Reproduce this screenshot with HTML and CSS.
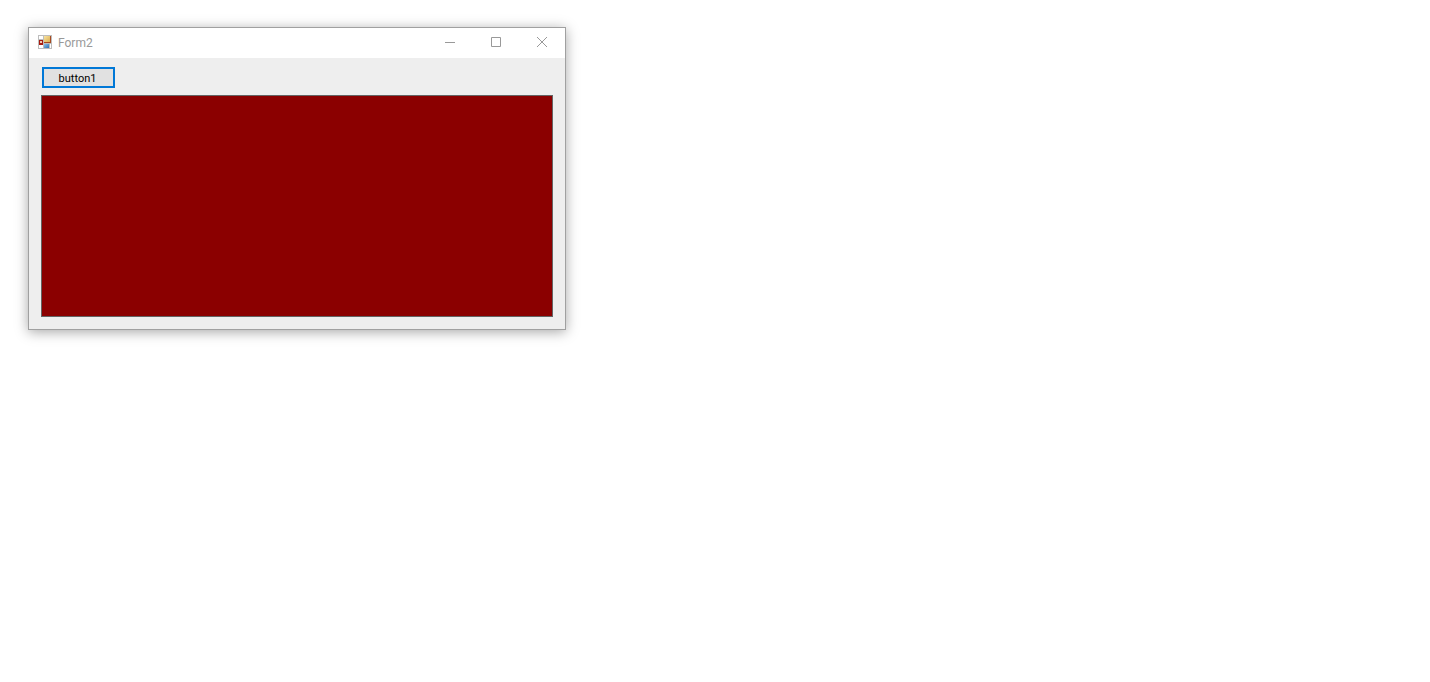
FILE: index.html
```html
<!DOCTYPE html>
<html lang="en">
<head>
    <meta charset="UTF-8">
    <meta name="viewport" content="width=device-width, initial-scale=1.0">
    <title>Form2</title>
    <link rel="stylesheet" href="styles.css">
</head>
<body>
    <main class="window">
        <header class="title-bar">
            <svg class="app-icon" width="14" height="14" viewBox="0 0 14 14" shape-rendering="crispEdges" aria-hidden="true">
                <defs>
                    <linearGradient id="gold" x1="0" y1="0" x2="1" y2="1">
                        <stop offset="0" stop-color="#f8e3a0"/>
                        <stop offset="1" stop-color="#dcae50"/>
                    </linearGradient>
                    <linearGradient id="blue" x1="0" y1="0" x2="1" y2="1">
                        <stop offset="0" stop-color="#8cc0e8"/>
                        <stop offset="1" stop-color="#2f6fae"/>
                    </linearGradient>
                </defs>
                <rect width="14" height="14" fill="#bdbdbd"/>
                <rect x="1" y="1" width="4" height="3" fill="#fff"/>
                <rect x="1" y="10" width="4" height="3" fill="#fff"/>
                <rect x="12" y="9" width="1" height="4" fill="#fff"/>
                <rect x="1" y="5" width="4" height="5" fill="#a81c10"/>
                <rect x="2" y="6" width="2" height="2" fill="#f0c8b0"/>
                <rect x="6" y="1" width="7" height="7" fill="#a84a20"/>
                <rect x="6" y="1" width="6" height="6" fill="url(#gold)"/>
                <rect x="6" y="9" width="5" height="4" fill="url(#blue)"/>
            </svg>
            <h1 class="title">Form2</h1>
            <div class="controls">
                <button class="control" type="button" aria-label="Minimize">
                    <svg width="10" height="10" viewBox="0 0 10 10"><path d="M0 5.5h10"/></svg>
                </button>
                <button class="control" type="button" aria-label="Maximize">
                    <svg width="10" height="10" viewBox="0 0 10 10"><path d="M.5 .5h9v9h-9z"/></svg>
                </button>
                <button class="control" type="button" aria-label="Close">
                    <svg width="10" height="10" viewBox="0 0 10 10"><path d="M0 0l10 10M10 0L0 10"/></svg>
                </button>
            </div>
        </header>
        <div class="content">
            <button class="button" type="button">button1</button>
            <div class="panel"></div>
        </div>
    </main>
</body>
</html>
```
FILE: styles.css
```css
:root {
    --border-color: #a0a0a0;
    --inactive-color: #999;
    --form-color: #eee;
    --accent-color: #0078d7;
    --panel-color: #8b0000;
}

* {
    margin: 0;
    padding: 0;
    box-sizing: border-box;
    font-family: "Segoe UI", Roboto, sans-serif;
}

body {
    background: #fff;
    padding: 27px 28px;
}

.window {
    max-width: 538px;
    background: var(--form-color);
    border: 1px solid var(--border-color);
    box-shadow: 0 2px 12px rgba(0, 0, 0, 0.35);
}

.title-bar {
    display: flex;
    align-items: center;
    height: 30px;
    padding-left: 9px;
    background: #fff;
}

.app-icon {
    margin-bottom: 2px;
}

.title {
    margin-left: 6px;
    font-size: 12px;
    font-weight: 400;
    line-height: 16px;
    color: var(--inactive-color);
}

.controls {
    display: flex;
    align-self: stretch;
    margin-left: auto;
}

.control {
    display: flex;
    justify-content: center;
    align-items: center;
    width: 46px;
    padding-bottom: 2px;
    background: none;
    border: none;
}

.control svg {
    fill: none;
    stroke: var(--inactive-color);
}

.control:hover {
    background: #e5e5e5;
}

.content {
    padding: 9px 12px 12px;
}

.button {
    display: block;
    width: 73px;
    height: 21px;
    margin: 0 1px 7px;
    padding: 2px 2px 0 0;
    background: #e1e1e1;
    border: 2px solid var(--accent-color);
    font-size: 11px;
    line-height: 15px;
    color: #000;
}

.panel {
    height: 222px;
    background: var(--panel-color);
    border: 1px solid #646464;
}
```
